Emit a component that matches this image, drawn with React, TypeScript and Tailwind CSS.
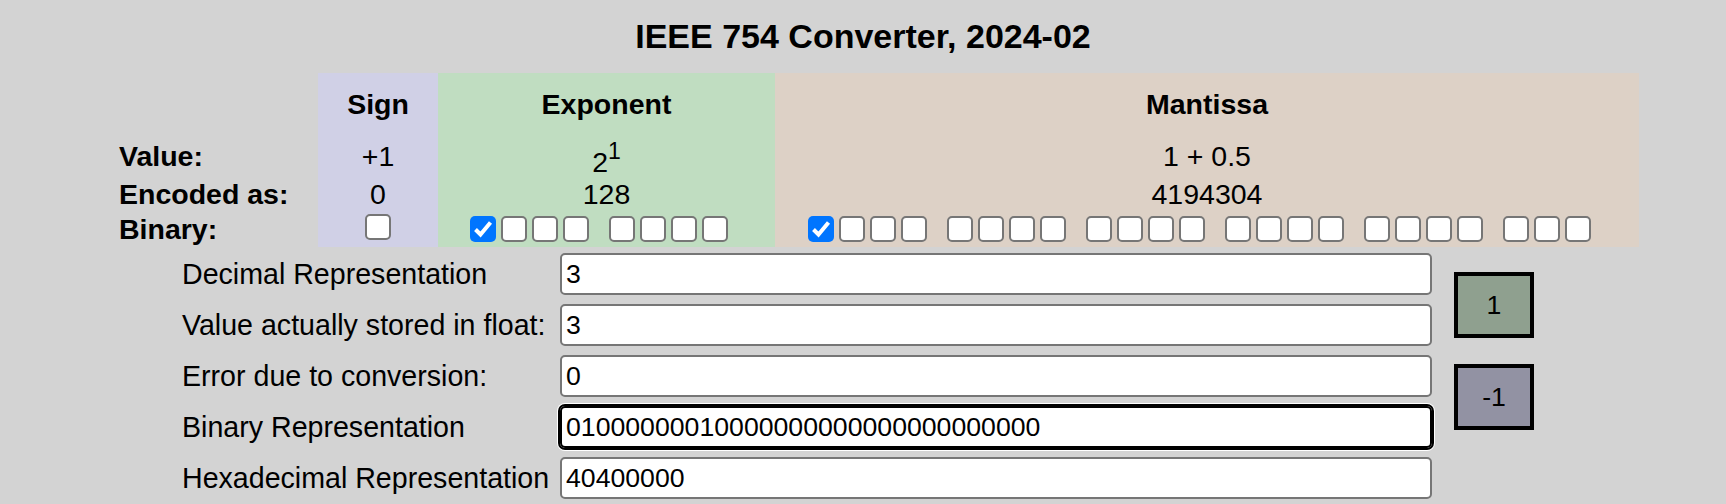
import React from "react";

const font = { fontFamily: '"Liberation Sans", Arial, sans-serif' };

const expGroups = [4, 4];
const manGroups = [4, 4, 4, 4, 4, 3];

const Box = ({ checked = false }: { checked?: boolean }) =>
  checked ? (
    <span className="w-[26px] h-[26px] rounded-[5px] bg-[#0075ff] flex items-center justify-center">
      <svg width="26" height="26" viewBox="0 0 26 26">
        <polyline points="5.5,13.5 10.5,18.5 20.5,6.5" fill="none" stroke="white" strokeWidth="4" />
      </svg>
    </span>
  ) : (
    <span className="w-[26px] h-[26px] rounded-[5px] bg-white border-[2.5px] border-[#767676]" />
  );

const BitGroups = ({ groups }: { groups: number[] }) => {
  let bit = 0;
  return (
    <div className="flex gap-[20px]">
      {groups.map((n, g) => (
        <div key={g} className="flex gap-[5px]">
          {Array.from({ length: n }).map((_, i) => {
            const checked = bit === 0;
            bit++;
            return <Box key={i} checked={checked} />;
          })}
        </div>
      ))}
    </div>
  );
};

const fields = [
  { label: "Decimal Representation", value: "3" },
  { label: "Value actually stored in float:", value: "3" },
  { label: "Error due to conversion:", value: "0" },
  { label: "Binary Representation", value: "01000000010000000000000000000000", focus: true },
  { label: "Hexadecimal Representation", value: "40400000" },
];

export default function App() {
  return (
    <div className="min-h-screen bg-[#d3d3d3] text-black overflow-hidden" style={font}>
      <h1 className="pt-[17px] text-center text-[34px] font-bold leading-[39px]">
        IEEE 754 Converter, 2024-02
      </h1>

      {/* bit layout table */}
      <div className="mt-[17px] flex justify-center">
        <div className="grid grid-cols-[231px_120px_337px_864px] grid-rows-[62px_43px_33px_36px] text-[28.5px] leading-[33px]">
          <div />
          <div className="bg-[#d0d0e6] flex items-center justify-center font-bold">Sign</div>
          <div className="bg-[#c0ddc1] flex items-center justify-center font-bold">Exponent</div>
          <div className="bg-[#ddd1c6] flex items-center justify-center font-bold">Mantissa</div>

          <div className="pl-[32px] flex items-center font-bold">Value:</div>
          <div className="bg-[#d0d0e6] flex items-center justify-center">+1</div>
          <div className="bg-[#c0ddc1] flex items-center justify-center">
            <span className="relative top-[6px]">
              2<sup className="text-[23px] top-[-13px]">1</sup>
            </span>
          </div>
          <div className="bg-[#ddd1c6] flex items-center justify-center">1 + 0.5</div>

          <div className="pl-[32px] flex items-center font-bold">Encoded as:</div>
          <div className="bg-[#d0d0e6] flex items-center justify-center">0</div>
          <div className="bg-[#c0ddc1] flex items-center justify-center">128</div>
          <div className="bg-[#ddd1c6] flex items-center justify-center">4194304</div>

          <div className="pl-[32px] flex items-center font-bold">Binary:</div>
          <div className="bg-[#d0d0e6] flex items-center justify-center">
            <span className="relative top-[-2px] flex">
              <Box />
            </span>
          </div>
          <div className="bg-[#c0ddc1] flex items-center justify-center pr-[15px]">
            <BitGroups groups={expGroups} />
          </div>
          <div className="bg-[#ddd1c6] flex items-center justify-center pr-[15px]">
            <BitGroups groups={manGroups} />
          </div>
        </div>
      </div>

      {/* representations */}
      <div className="mt-[6px] ml-[182px] flex">
        <div className="flex flex-col gap-[9px]">
          {fields.map((f) => (
            <div key={f.label} className="flex items-center">
              <div className="w-[378px] text-[28.6px] leading-[33px] whitespace-nowrap">{f.label}</div>
              <input
                readOnly
                value={f.value}
                className={
                  f.focus
                    ? "w-[872px] h-[42px] px-[4px] bg-white rounded-[5px] border-2 border-black outline-2 outline-black shadow-[0_0_0_3px_white] text-[26.67px]"
                    : "w-[872px] h-[42px] px-[4px] bg-white rounded-[5px] border-2 border-[#767676] outline-none text-[26.67px]"
                }
                style={font}
              />
            </div>
          ))}
        </div>
        <div className="ml-[22px] pt-[19px] flex flex-col gap-[26px]">
          <button className="w-[80px] h-[66px] border-4 border-black bg-[#8fa08f] text-[26.67px]" style={font}>
            1
          </button>
          <button className="w-[80px] h-[66px] border-4 border-black bg-[#9292a3] text-[26.67px]" style={font}>
            -1
          </button>
        </div>
      </div>
    </div>
  );
}
